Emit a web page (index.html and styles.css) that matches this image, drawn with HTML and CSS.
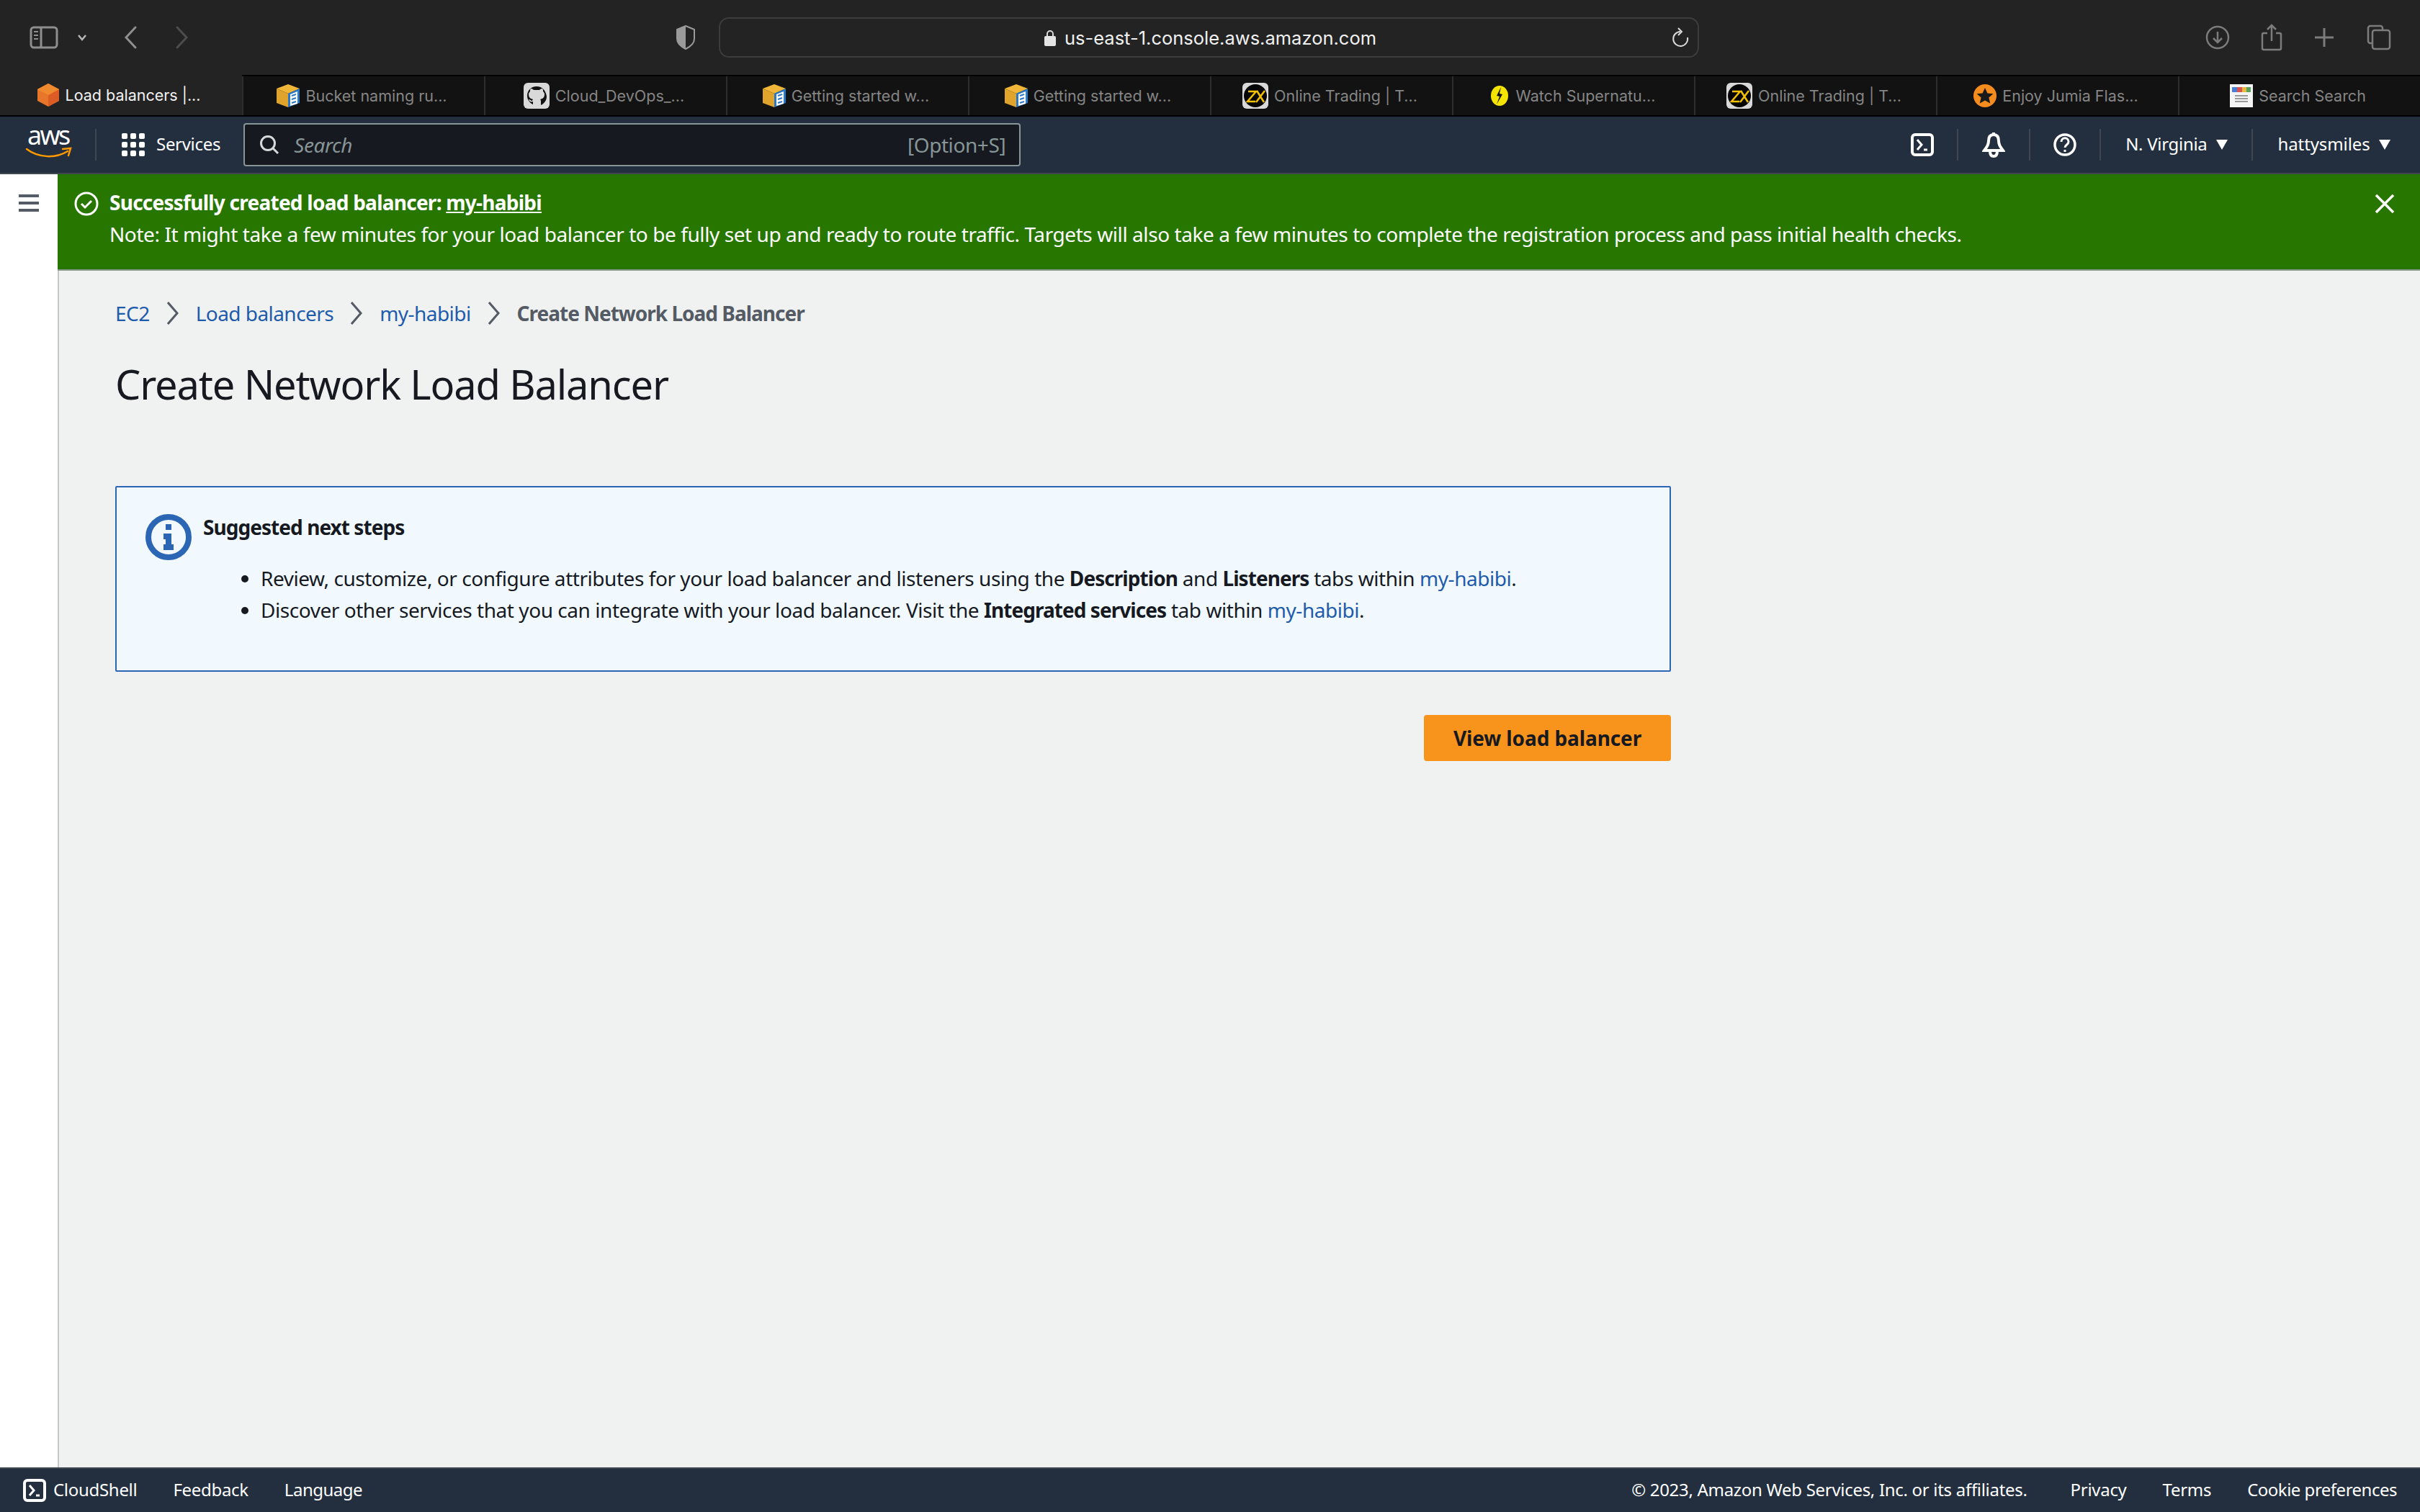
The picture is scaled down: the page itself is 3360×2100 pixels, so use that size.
FILE: index.html
```html
<!DOCTYPE html>
<html lang="en">
<head>
  <meta charset="UTF-8">
  <title>Create Network Load Balancer</title>
  <link rel="stylesheet" href="styles.css">
</head>
<body>
  <div class="toolbar">
    <svg class="tb-sidebar" width="40" height="32" viewBox="0 0 40 32" fill="none" stroke="#8e8e8e" stroke-width="3"><rect x="2" y="2" width="36" height="28" rx="4"/><path d="M16 2v28"/><path d="M6 8h6M6 13h6M6 18h6" stroke-width="2"/></svg>
    <svg class="tb-chevron" width="14" height="10" viewBox="0 0 14 10" fill="none" stroke="#b5b5b5" stroke-width="2.5"><path d="M2 2l5 6 5-6"/></svg>
    <svg class="tb-back" width="18" height="32" viewBox="0 0 18 32" fill="none" stroke="#8e8e8e" stroke-width="3" stroke-linecap="round"><path d="M16 2L3 16l13 14"/></svg>
    <svg class="tb-forward" width="18" height="32" viewBox="0 0 18 32" fill="none" stroke="#4c4c4c" stroke-width="3" stroke-linecap="round"><path d="M2 2l13 14L2 30"/></svg>
    <svg class="tb-shield" width="26" height="34" viewBox="0 0 26 34"><path d="M13 1l12 5v13c0 6-6 11-12 14C7 30 1 25 1 19V6z" fill="none" stroke="#9a9a9a" stroke-width="2"/><path d="M13 1L1 6v13c0 6 6 11 12 14z" fill="#9a9a9a"/></svg>
    <div class="address">
      <div class="address-text">
        <svg width="16" height="23" viewBox="0 0 16 23"><path d="M4 10V6a4 4 0 0 1 8 0v4" fill="none" stroke="#d8d8d8" stroke-width="2"/><rect y="9" width="16" height="14" rx="2" fill="#e4e4e4"/></svg>
        <span>us-east-1.console.aws.amazon.com</span>
      </div>
      <svg class="reload" width="24" height="28" viewBox="0 0 24 28" fill="none" stroke="#d8d8d8" stroke-width="2"><path d="M12 6a10 10 0 1 0 10 8"/><path d="M9 1l5 5-5 5"/></svg>
    </div>
    <svg class="tb-download" width="34" height="34" viewBox="0 0 34 34" fill="none" stroke="#7c7c7c" stroke-width="2.5"><circle cx="17" cy="17" r="15"/><path d="M17 9v15M11 18l6 6 6-6"/></svg>
    <svg class="tb-share" width="30" height="38" viewBox="0 0 30 38" fill="none" stroke="#7c7c7c" stroke-width="2.5"><path d="M9 13H4a2 2 0 0 0-2 2v19a2 2 0 0 0 2 2h22a2 2 0 0 0 2-2V15a2 2 0 0 0-2-2h-5"/><path d="M15 24V2M9 8l6-6 6 6"/></svg>
    <svg class="tb-plus" width="28" height="28" viewBox="0 0 28 28" fill="none" stroke="#7c7c7c" stroke-width="3"><path d="M14 1v26M1 14h26"/></svg>
    <svg class="tb-tabs" width="34" height="36" viewBox="0 0 34 36" fill="none" stroke="#7c7c7c" stroke-width="2.5"><path d="M7 26H5a3 3 0 0 1-3-3V5a3 3 0 0 1 3-3h14a3 3 0 0 1 3 3v2"/><rect x="8" y="8" width="24" height="26" rx="3"/></svg>
  </div>

  <div class="tabs">
    <div class="tab tab-active">
      <svg width="30" height="32" viewBox="0 0 30 32"><path d="M15 0l15 8v16l-15 8-15-8V8z" fill="#e8762a"/><path d="M15 32l15-8V8l-15 8z" fill="#dd5c26"/><path d="M15 0l15 8-15 8L0 8z" fill="#f08a2e"/></svg>
      <span>Load balancers |...</span>
    </div>
    <div class="tab">
      <svg width="32" height="32" viewBox="0 0 32 32"><path d="M16 0l16 6-16 7L0 6z" fill="#f0b638"/><path d="M0 6l16 7v19L0 26z" fill="#e0a42c"/><path d="M16 13l16-7v20l-16 6z" fill="#2a79c9"/><path d="M19 14l10-4v17l-10 3z" fill="#fff"/><path d="M21 16l6-2M21 21l6-2M21 26l6-2" stroke="#2a79c9" stroke-width="2"/></svg>
      <span>Bucket naming ru...</span>
    </div>
    <div class="tab">
      <svg width="36" height="36" viewBox="0 0 36 36"><rect width="36" height="36" rx="6" fill="#d9d9d9"/><path d="M18 5C10 5 5 11 5 18c0 6 4 10 8 12v-4c-3 1-5 0-6-3 2 0 3 2 5 2 0-1 1-2 1-2-4-1-6-3-6-7 0-2 1-3 2-4 0-2 0-3 1-4 2 0 3 1 4 2h8c1-1 2-2 4-2 1 1 1 2 1 4 1 1 2 2 2 4 0 4-2 6-6 7 1 1 1 2 1 3v5c4-2 8-6 8-12C31 11 26 5 18 5z" fill="#111"/></svg>
      <span>Cloud_DevOps_...</span>
    </div>
    <div class="tab">
      <svg width="32" height="32" viewBox="0 0 32 32"><path d="M16 0l16 6-16 7L0 6z" fill="#f0b638"/><path d="M0 6l16 7v19L0 26z" fill="#e0a42c"/><path d="M16 13l16-7v20l-16 6z" fill="#2a79c9"/><path d="M19 14l10-4v17l-10 3z" fill="#fff"/><path d="M21 16l6-2M21 21l6-2M21 26l6-2" stroke="#2a79c9" stroke-width="2"/></svg>
      <span>Getting started w...</span>
    </div>
    <div class="tab">
      <svg width="32" height="32" viewBox="0 0 32 32"><path d="M16 0l16 6-16 7L0 6z" fill="#f0b638"/><path d="M0 6l16 7v19L0 26z" fill="#e0a42c"/><path d="M16 13l16-7v20l-16 6z" fill="#2a79c9"/><path d="M19 14l10-4v17l-10 3z" fill="#fff"/><path d="M21 16l6-2M21 21l6-2M21 26l6-2" stroke="#2a79c9" stroke-width="2"/></svg>
      <span>Getting started w...</span>
    </div>
    <div class="tab">
      <svg width="36" height="36" viewBox="0 0 36 36"><rect width="36" height="36" rx="6" fill="#d9d9d9"/><circle cx="18" cy="18" r="16" fill="#050505"/><path d="M8 12h11L7 26h11M20 11l10 16M31 11L19 27" fill="none" stroke="#f2c100" stroke-width="2.5"/></svg>
      <span>Online Trading | T...</span>
    </div>
    <div class="tab">
      <svg width="30" height="32" viewBox="0 0 30 32"><ellipse cx="15" cy="16" rx="15" ry="16" fill="#111"/><ellipse cx="15" cy="16" rx="12" ry="14" fill="#f5e400"/><path d="M17 4l-6 12 4 1-4 11 8-14-4-1z" fill="#111"/></svg>
      <span>Watch Supernatu...</span>
    </div>
    <div class="tab">
      <svg width="36" height="36" viewBox="0 0 36 36"><rect width="36" height="36" rx="6" fill="#d9d9d9"/><circle cx="18" cy="18" r="16" fill="#050505"/><path d="M8 12h11L7 26h11M20 11l10 16M31 11L19 27" fill="none" stroke="#f2c100" stroke-width="2.5"/></svg>
      <span>Online Trading | T...</span>
    </div>
    <div class="tab">
      <svg width="32" height="32" viewBox="0 0 32 32"><circle cx="16" cy="16" r="16" fill="#f68b1e"/><path d="M16 5l3.4 7.5 8 .8-6 5.3 1.8 8L16 22.400l-7.200 4.200 1.800-8-6-5.300 8-.8z" fill="#1a1a1a"/></svg>
      <span>Enjoy Jumia Flas...</span>
    </div>
    <div class="tab">
      <svg width="32" height="32" viewBox="0 0 32 32"><rect width="32" height="32" fill="#f4f4f4"/><path d="M3 4h7v7H3z" fill="#4a7fd8"/><path d="M10 4h7v7h-7z" fill="#d9534f"/><path d="M17 4h6v7h-6z" fill="#e8b93a"/><path d="M23 4h6v7h-6z" fill="#58a35c"/><path d="M7 16h18M7 20h18M7 24h18" stroke="#9a9a9a" stroke-width="2"/></svg>
      <span>Search Search</span>
    </div>
  </div>

  <nav class="navbar">
    <div class="aws-logo">
      <span class="aws-word">aws</span>
      <svg width="66" height="16" viewBox="0 0 66 16" fill="none" stroke="#f90" stroke-width="2.500" stroke-linecap="round"><path d="M3 4C20 17 44 17 60 7"/><path d="M53 4l11-1-3 10"/></svg>
    </div>
    <div class="nav-sep nav-sep-logo"></div>
    <div class="services">
      <div class="grid-icon"><i></i><i></i><i></i><i></i><i></i><i></i><i></i><i></i><i></i></div>
      <span>Services</span>
    </div>
    <div class="search">
      <svg width="28" height="28" viewBox="0 0 28 28" fill="none" stroke="#d5dbdb" stroke-width="3"><circle cx="12" cy="12" r="9.500"/><path d="M19 19l7 7"/></svg>
      <span class="search-text">Search</span>
      <span class="search-key">[Option+S]</span>
    </div>
    <svg class="nav-shell" width="32" height="32" viewBox="0 0 32 32" fill="none" stroke="#fff" stroke-width="4"><rect x="2" y="2" width="28" height="28" rx="4"/><path d="M9 9l6 7-6 7" stroke-width="3"/><path d="M18 23h5" stroke-width="3"/></svg>
    <div class="nav-sep nav-sep-a"></div>
    <svg class="nav-bell" width="32" height="36" viewBox="0 0 32 36" fill="none" stroke="#fff" stroke-width="4"><path d="M16 4c-5 0-7 4-7 9 0 6-3 9-6 13h26c-3-4-6-7-6-13 0-5-2-9-7-9z"/><path d="M16 1v3"/><path d="M11 27c0 5 2 7 5 7s5-2 5-7"/></svg>
    <div class="nav-sep nav-sep-b"></div>
    <svg class="nav-help" width="32" height="32" viewBox="0 0 32 32" fill="none" stroke="#fff" stroke-width="3.500"><circle cx="16" cy="16" r="14"/><path d="M11 12c0-7 10-7 10 0 0 4-5 4-5 8" stroke-width="3"/><path d="M16 23v3" stroke-width="3"/></svg>
    <div class="nav-sep nav-sep-c"></div>
    <span class="nav-region">N. Virginia</span>
    <span class="caret caret-region"></span>
    <div class="nav-sep nav-sep-d"></div>
    <span class="nav-user">hattysmiles</span>
    <span class="caret caret-user"></span>
  </nav>

  <div class="main">
    <aside class="sidebar">
      <div class="hamburger"><i></i><i></i><i></i></div>
    </aside>
    <div class="page">
      <div class="flash">
        <svg class="flash-icon" width="34" height="34" viewBox="0 0 34 34" fill="none" stroke="#fff" stroke-width="3"><circle cx="17" cy="17" r="15"/><path d="M10 17l5 5 9-9"/></svg>
        <div class="flash-body">
          <div class="flash-title">Successfully created load balancer: <a href="#">my-habibi</a></div>
          <div class="flash-note">Note: It might take a few minutes for your load balancer to be fully set up and ready to route traffic. Targets will also take a few minutes to complete the registration process and pass initial health checks.</div>
        </div>
        <svg class="flash-close" width="28" height="28" viewBox="0 0 28 28" fill="none" stroke="#fff" stroke-width="3.500"><path d="M2 2l24 24M26 2L2 26"/></svg>
      </div>

      <div class="content">
        <div class="breadcrumbs">
          <a href="#">EC2</a>
          <svg width="16" height="32" viewBox="0 0 16 32" fill="none" stroke="#545b64" stroke-width="3"><path d="M1 1l13 15L1 31"/></svg>
          <a href="#">Load balancers</a>
          <svg width="16" height="32" viewBox="0 0 16 32" fill="none" stroke="#545b64" stroke-width="3"><path d="M1 1l13 15L1 31"/></svg>
          <a href="#">my-habibi</a>
          <svg width="16" height="32" viewBox="0 0 16 32" fill="none" stroke="#545b64" stroke-width="3"><path d="M1 1l13 15L1 31"/></svg>
          <span>Create Network Load Balancer</span>
        </div>
        <h1>Create Network Load Balancer</h1>

        <div class="panel">
          <div class="info">
            <svg class="info-icon" width="64" height="66" viewBox="0 0 64 66"><circle cx="32" cy="33" r="28" fill="none" stroke="#2a66b3" stroke-width="8"/><path d="M28 15h8v8h-8zM25 28h11v15h3v8H25v-8h3v-7h-3z" fill="#2a66b3"/></svg>
            <div class="info-body">
              <div class="info-title">Suggested next steps</div>
              <ul>
                <li>Review, customize, or configure attributes for your load balancer and listeners using the <b>Description</b> and <b>Listeners</b> tabs within <a href="#">my-habibi</a>.</li>
                <li>Discover other services that you can integrate with your load balancer. Visit the <b>Integrated services</b> tab within <a href="#">my-habibi</a>.</li>
              </ul>
            </div>
          </div>
          <div class="actions">
            <button>View load balancer</button>
          </div>
        </div>
      </div>
    </div>
  </div>

  <footer class="footer">
    <svg width="32" height="32" viewBox="0 0 32 32" fill="none" stroke="#fff" stroke-width="4"><rect x="2" y="2" width="28" height="28" rx="4"/><path d="M9 9l6 7-6 7" stroke-width="3"/><path d="M18 23h5" stroke-width="3"/></svg>
    <span class="foot-shell">CloudShell</span>
    <span class="foot-feedback">Feedback</span>
    <span class="foot-language">Language</span>
    <span class="foot-copy">© 2023, Amazon Web Services, Inc. or its affiliates.</span>
    <span class="foot-privacy">Privacy</span>
    <span class="foot-terms">Terms</span>
    <span class="foot-cookie">Cookie preferences</span>
  </footer>
</body>
</html>
```

FILE: styles.css
```css
* {
  box-sizing: border-box;
}

html, body {
  height: 100%;
}

body {
  margin: 0;
  width: 3360px;
  height: 2100px;
  display: flex;
  flex-direction: column;
  overflow: hidden;
  font-family: "Noto Sans", Arial, sans-serif;
  font-size: 28px;
  letter-spacing: -0.42px;
  color: #16191f;
  background: #f0f2f2;
}

a {
  color: #1f5bab;
  text-decoration: none;
}

b {
  letter-spacing: -0.95px;
}

/* safari chrome */
.toolbar {
  height: 104px;
  flex: none;
  display: flex;
  align-items: center;
  background: #232323;
}

.tb-sidebar { margin-left: 41px; }
.tb-chevron { margin-left: 26px; }
.tb-back { margin-left: 51px; }
.tb-forward { margin-left: 54px; }
.tb-shield { margin-left: 677px; }

.address {
  width: 1361px;
  height: 56px;
  margin-left: 33px;
  padding-left: 4px;
  border: 2px solid #3c3c3c;
  border-radius: 14px;
  display: flex;
  align-items: center;
  position: relative;
  justify-content: center;
}

.address-text {
  display: flex;
  align-items: center;
  gap: 12px;
  color: #f0f0f0;
  font-family: Inter, sans-serif;
  font-size: 25.500px;
  letter-spacing: 0;
}

.reload {
  position: absolute;
  right: 12px;
  top: 12px;
}

.tb-download { margin-left: 703px; }
.tb-share { margin-left: 43px; }
.tb-plus { margin-left: 44px; }
.tb-tabs { margin-left: 45px; }

.tabs {
  height: 56px;
  flex: none;
  display: flex;
  background: #121212;
  border-top: 2px solid #000;
}

.tab {
  width: 336px;
  display: flex;
  align-items: center;
  justify-content: center;
  gap: 8px;
  padding-right: 5px;
  color: #858585;
  font-family: Inter, sans-serif;
  font-size: 21.500px;
  letter-spacing: 0;
  border-left: 2px solid #2e2e2e;
}

.tab-active {
  background: #232323;
  color: #f2f2f2;
  border-left: 0;
  margin-top: -2px;
}

/* aws top nav */
.navbar {
  height: 82px;
  flex: none;
  display: flex;
  align-items: center;
  color: #fff;
  font-size: 24px;
  letter-spacing: -0.3px;
  background: #232f3e;
  border-top: 2px solid #000;
  border-bottom: 2px solid #414750;
}

.aws-logo {
  width: 66px;
  margin: 0 0 10px 34px;
  display: flex;
  flex-direction: column;
}

.aws-word {
  padding-left: 4px;
  font-size: 36px;
  letter-spacing: -2.8px;
  line-height: 30px;
}

.nav-sep {
  width: 2px;
  height: 44px;
  background: #414750;
}

.nav-sep-logo { margin-left: 32px; }

.services {
  display: flex;
  align-items: center;
  gap: 16px;
  margin-left: 35px;
}

.services span { margin-bottom: 3px; }

.grid-icon {
  display: grid;
  grid-template-columns: repeat(3, 8px);
  gap: 4px;
}

.grid-icon i {
  height: 8px;
  background: #fff;
  border-radius: 2px;
}

.search {
  width: 1079px;
  height: 60px;
  margin-left: 32px;
  padding: 0 19px 0 20px;
  display: flex;
  align-items: center;
  gap: 20px;
  background: #16191f;
  border: 2px solid #879596;
  border-radius: 4px;
  color: #879596;
  font-size: 28px;
  letter-spacing: -0.42px;
}

.search-text {
  font-style: italic;
  flex: 1;
}

.nav-shell { margin-left: 1236px; }
.nav-sep-a { margin-left: 32px; }
.nav-bell { margin-left: 33px; }
.nav-sep-b { margin-left: 33px; }
.nav-help { margin-left: 32px; }
.nav-sep-c { margin-left: 32px; }

.nav-region {
  margin: 0 0 3px 34px;
}

.nav-sep-d { margin-left: 33px; }

.nav-user {
  margin: 0 0 3px 35px;
  letter-spacing: -0.1px;
}

.caret {
  width: 0;
  height: 0;
  margin-left: 12px;
  border-left: 8px solid transparent;
  border-right: 8px solid transparent;
  border-top: 14px solid #fff;
}

/* page */
.main {
  flex: 1;
  display: flex;
  min-height: 0;
}

.sidebar {
  width: 80px;
  flex: none;
  background: #fff;
}

.hamburger {
  width: 28px;
  margin: 28px 0 0 26px;
  display: flex;
  flex-direction: column;
  gap: 6px;
}

.hamburger i {
  height: 4px;
  background: #545b64;
}

.page {
  flex: 1;
  min-width: 0;
  display: flex;
  flex-direction: column;
}

.flash {
  height: 134px;
  flex: none;
  display: flex;
  align-items: flex-start;
  padding: 23px 35px 0 23px;
  color: #fff;
  background: #277600;
  border-bottom: 2px solid #8a9a8a;
}

.flash-icon { margin-top: 1px; }

.flash-body {
  flex: 1;
  margin-left: 15px;
  line-height: 44px;
  margin-top: -6px;
}

.flash-title {
  font-weight: 700;
  letter-spacing: -0.75px;
}

.flash-title a {
  color: #fff;
  text-decoration: underline;
}

.flash-close { margin-top: 4px; }

.content {
  flex: 1;
  padding: 39px 0 0 78px;
  border-left: 2px solid #c3c9c9;
}

.breadcrumbs {
  display: flex;
  align-items: center;
  gap: 24px;
  height: 40px;
  color: #545b64;
  font-weight: 700;
  letter-spacing: -1px;
}

.breadcrumbs a {
  font-weight: 400;
  letter-spacing: -0.55px;
}

h1 {
  margin: 42px 0 0;
  font-size: 56px;
  font-weight: 400;
  letter-spacing: -1.15px;
  line-height: 72px;
}

.panel { width: 2160px; }

.info {
  height: 258px;
  margin-top: 106px;
  padding: 35px 0 0 40px;
  display: flex;
  background: #f1f9ff;
  border: 2px solid #2a66b3;
  border-radius: 2px;
}

.info-icon { margin-top: 1px; }

.info-body { margin-left: 16px; }

.info-title {
  font-weight: 700;
  letter-spacing: -0.95px;
  line-height: 40px;
}

ul {
  margin: 29px 0 0;
  padding: 0 0 0 80px;
  letter-spacing: -0.45px;
  line-height: 44px;
}

.actions {
  display: flex;
  justify-content: flex-end;
  margin-top: 60px;
}

button {
  width: 343px;
  height: 64px;
  border: none;
  border-radius: 4px;
  background: #f8931c;
  color: #16191f;
  font-family: inherit;
  font-size: 28px;
  font-weight: 700;
  letter-spacing: -0.1px;
}

/* footer */
.footer {
  height: 62px;
  flex: none;
  display: flex;
  align-items: center;
  padding-left: 32px;
  color: #fff;
  font-size: 24px;
  letter-spacing: -0.3px;
  background: #232f3e;
  border-top: 2px solid #414750;
}

.footer span { margin-bottom: 3px; }

.foot-shell { margin-left: 10px; }
.foot-feedback { margin-left: 50px; }

.foot-language {
  margin-left: 50px;
  letter-spacing: -0.5px;
}

.foot-copy { margin-left: auto; }
.foot-privacy { margin-left: 60px; }
.foot-terms { margin-left: 50px; }

.foot-cookie {
  margin-left: 50px;
  margin-right: 32px;
  letter-spacing: -0.5px;
}
```
